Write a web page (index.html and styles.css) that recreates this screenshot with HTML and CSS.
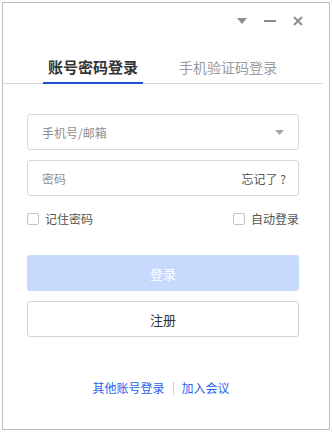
FILE: index.html
```html
<!DOCTYPE html>
<html lang="zh">
<head>
<meta charset="utf-8">
<title>登录</title>
<link rel="stylesheet" href="styles.css">
</head>
<body>
<div class="window">
  <div class="titlebar">
    <span class="tb-btn">
      <svg width="10" height="6" viewBox="0 0 10 6"><path d="M0 0H10L5 6Z" fill="#8c8c8c"/></svg>
    </span>
    <span class="tb-btn">
      <svg width="12" height="2" viewBox="0 0 12 2"><rect width="12" height="2" fill="#8c8c8c"/></svg>
    </span>
    <span class="tb-btn">
      <svg width="10" height="10" viewBox="0 0 10 10"><path d="M1 1L9 9M9 1L1 9" stroke="#8c8c8c" stroke-width="1.8"/></svg>
    </span>
  </div>
  <div class="tabs">
    <div class="tab active">账号密码登录</div>
    <div class="tab">手机验证码登录</div>
  </div>
  <div class="form">
    <div class="field">
      <span class="placeholder">手机号/邮箱</span>
      <svg class="caret" width="9" height="5" viewBox="0 0 9 5"><path d="M0 0H9L4.5 5Z" fill="#a6a6a6"/></svg>
    </div>
    <div class="field">
      <span class="placeholder">密码</span>
      <span class="forgot">忘记了 ?</span>
    </div>
    <div class="checks">
      <label class="check"><span class="box"></span>记住密码</label>
      <label class="check"><span class="box"></span>自动登录</label>
    </div>
    <div class="btn primary">登录</div>
    <div class="btn secondary">注册</div>
    <div class="links">
      <span class="link">其他账号登录</span>
      <span class="sep"></span>
      <span class="link">加入会议</span>
    </div>
  </div>
</div>
</body>
</html>
```

FILE: styles.css
```css
html, body {
  margin: 0;
  padding: 0;
  background: #ffffff;
}
body {
  font-family: "Noto Sans CJK SC", "Noto Sans", sans-serif;
  color: #333333;
}
.window {
  box-sizing: border-box;
  margin: 2px 0 0 2px;
  width: 328px;
  height: 428px;
  border: 1px solid #bcbcbc;
  background: #ffffff;
  display: flex;
  flex-direction: column;
}
.titlebar {
  height: 36px;
  display: flex;
  justify-content: flex-end;
  align-items: center;
  gap: 8px;
  padding-right: 21px;
}
.tb-btn {
  width: 20px;
  height: 20px;
  display: flex;
  align-items: center;
  justify-content: center;
}
.tabs {
  display: flex;
  gap: 35px;
  width: 320px;
  padding-left: 40px;
  box-sizing: border-box;
  border-bottom: 1px solid #d6d6d6;
}
.tab {
  width: 100px;
  text-align: center;
  font-size: 14px;
  line-height: 20px;
  padding-top: 18px;
  padding-bottom: 5px;
  border-bottom: 2px solid transparent;
  margin-bottom: -1px;
  color: #9a9a9a;
  white-space: nowrap;
}
.tab.active {
  font-size: 15px;
  font-weight: bold;
  color: #333333;
  border-bottom-color: #1d4fd1;
}
.form {
  display: flex;
  flex-direction: column;
  padding: 30px 0 0 24px;
  width: 272px;
}
.field {
  box-sizing: border-box;
  height: 36px;
  border: 1px solid #d9d9d9;
  border-radius: 3px;
  display: flex;
  align-items: center;
  justify-content: space-between;
  padding: 0 14px 0 14px;
  font-size: 12px;
  margin-bottom: 10px;
}
.placeholder {
  color: #8f8f8f;
}
.forgot {
  color: #555555;
  margin-right: -2px;
}
.checks {
  display: flex;
  justify-content: space-between;
  align-items: center;
  font-size: 12px;
  color: #555555;
  line-height: 16px;
  margin-top: 5px;
}
.check {
  display: flex;
  align-items: center;
  gap: 6px;
}
.box {
  box-sizing: border-box;
  width: 12px;
  height: 12px;
  border: 1px solid #c4c4c4;
  border-radius: 2px;
  background: #fff;
}
.btn {
  box-sizing: border-box;
  height: 36px;
  border-radius: 3px;
  display: flex;
  align-items: center;
  justify-content: center;
  font-size: 13px;
}
.primary {
  margin-top: 28px;
  background: #c7dafd;
  color: #ffffff;
}
.secondary {
  margin-top: 10px;
  border: 1px solid #d4d4d4;
  color: #333333;
}
.links {
  margin-top: 43px;
  display: flex;
  justify-content: center;
  align-items: center;
  gap: 8px;
  font-size: 12px;
  line-height: 16px;
  padding-right: 4px;
}
.link {
  color: #2763ee;
}
.sep {
  width: 1px;
  height: 13px;
  background: #d0d0d0;
}
```
